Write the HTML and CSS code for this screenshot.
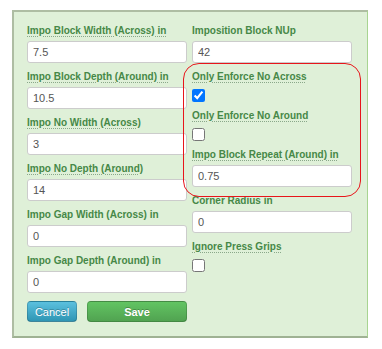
FILE: index.html
```html
<!DOCTYPE html>
<html lang="en">
<head>
    <meta charset="UTF-8">
    <title>Imposition</title>
    <link rel="stylesheet" href="styles.css">
</head>
<body>
    <div class="panel">
        <div class="columns">
            <div class="col">
                <div class="field">
                    <label class="hint">Impo Block Width (Across) in</label>
                    <input type="text" value="7.5">
                </div>
                <div class="field">
                    <label class="hint">Impo Block Depth (Around) in</label>
                    <input type="text" value="10.5">
                </div>
                <div class="field">
                    <label class="hint">Impo No Width (Across)</label>
                    <input type="text" value="3">
                </div>
                <div class="field">
                    <label class="hint">Impo No Depth (Around)</label>
                    <input type="text" value="14">
                </div>
                <div class="field">
                    <label>Impo Gap Width (Across) in</label>
                    <input type="text" value="0">
                </div>
                <div class="field">
                    <label>Impo Gap Depth (Around) in</label>
                    <input type="text" value="0">
                </div>
                <div class="buttons">
                    <button class="btn btn-cancel">Cancel</button>
                    <button class="btn btn-save">Save</button>
                </div>
            </div>
            <div class="col">
                <div class="field">
                    <label>Imposition Block NUp</label>
                    <input type="text" value="42">
                </div>
                <div class="field check">
                    <label class="hint">Only Enforce No Across</label>
                    <input type="checkbox" checked>
                </div>
                <div class="field check">
                    <label class="hint">Only Enforce No Around</label>
                    <input type="checkbox">
                </div>
                <div class="field">
                    <label class="hint">Impo Block Repeat (Around) in</label>
                    <input type="text" value="0.75">
                </div>
                <div class="field">
                    <label>Corner Radius in</label>
                    <input type="text" value="0">
                </div>
                <div class="field check">
                    <label class="hint">Ignore Press Grips</label>
                    <input type="checkbox">
                </div>
            </div>
        </div>
        <div class="highlight"></div>
    </div>
</body>
</html>
```

FILE: styles.css
```css
body {
    margin: 0;
    padding: 10px 0 0 12px;
    font-family: "Liberation Sans", Arial, sans-serif;
    background: #fff;
}
.panel {
    position: relative;
    width: 340px;
    height: 313px;
    padding: 11px 0 0 13px;
    background-color: #dff0d8;
    border-top: 2px solid #aebda3;
    border-left: 2px solid #aebda3;
    border-right: 1px solid #a8d491;
    border-bottom: 2px solid #9fb293;
    box-sizing: content-box;
}
.columns {
    display: grid;
    grid-template-columns: 160px 160px;
    column-gap: 5px;
}
.field {
    margin-bottom: 6px;
}
label {
    display: block;
    height: 16px;
    line-height: 16px;
    margin-bottom: 2px;
    font-size: 10px;
    font-weight: bold;
    color: #468847;
    white-space: nowrap;
}
.hint {
    text-decoration: underline dotted #8aa88a;
    text-underline-offset: 2px;
}
input[type="text"] {
    display: block;
    width: 160px;
    height: 22px;
    margin: 0;
    padding: 0 5px;
    border: 1px solid #ccc;
    border-radius: 3px;
    box-sizing: border-box;
    font-family: "Liberation Sans", Arial, sans-serif;
    font-size: 11px;
    color: #555;
    background: #fff;
}
.check {
    height: 39px;
    margin-bottom: 0;
}
input[type="checkbox"] {
    display: block;
    width: 13px;
    height: 13px;
    margin: 4px 0 0 0;
}
.buttons {
    display: flex;
    gap: 10px;
    margin-top: 8px;
}
.btn {
    height: 21px;
    padding: 0;
    border: 1px solid rgba(0, 0, 0, 0.15);
    border-bottom-color: rgba(0, 0, 0, 0.3);
    border-radius: 4px;
    color: #fff;
    font-family: "Liberation Sans", Arial, sans-serif;
    font-size: 11px;
    text-shadow: 0 -1px 0 rgba(0, 0, 0, 0.25);
    cursor: pointer;
}
.btn-cancel {
    width: 50px;
    background: linear-gradient(#5bc0de, #2f96b4);
}
.btn-save {
    width: 100px;
    font-weight: bold;
    background: linear-gradient(#62c462, #51a351);
}
.highlight {
    position: absolute;
    left: 169px;
    top: 51px;
    width: 178px;
    height: 134px;
    border: 1px solid #e8151b;
    border-radius: 16px;
    box-sizing: border-box;
    pointer-events: none;
}
```
